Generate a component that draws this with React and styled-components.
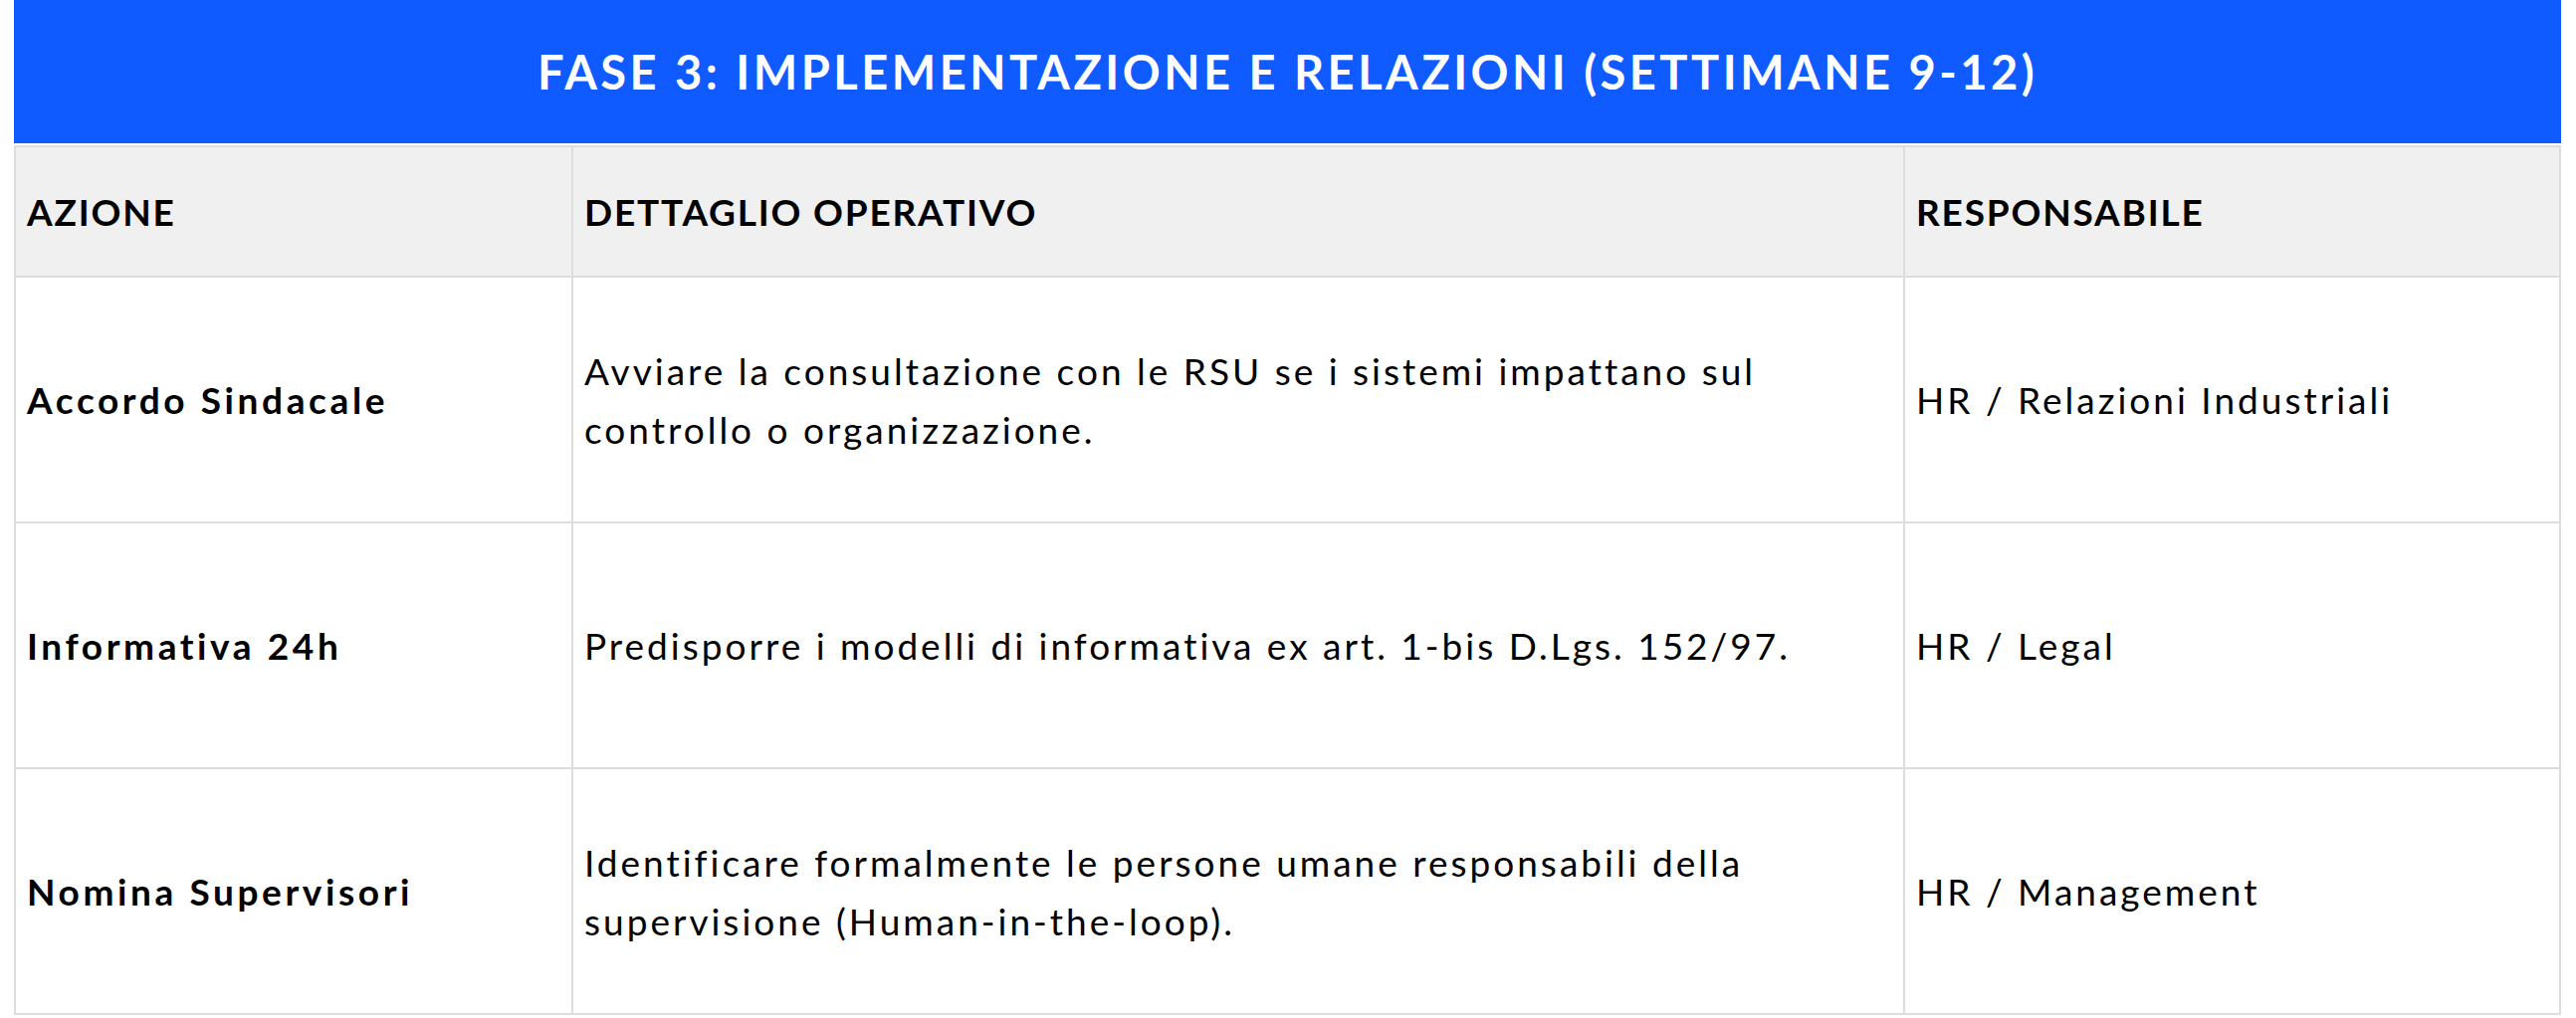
import React from 'react';
import styled, { createGlobalStyle } from 'styled-components';

const GlobalStyle = createGlobalStyle`
  html, body {
    margin: 0;
    padding: 0;
    background: #ffffff;
  }
  body {
    font-family: Lato, "Open Sans", sans-serif;
    color: #000000;
  }
`;

const Page = styled.div`
  padding: 0 15px 0 14px;
`;

const TitleBar = styled.div`
  height: 144px;
  background-color: #0f5bff;
  color: #ffffff;
  display: flex;
  align-items: center;
  justify-content: center;
  font-size: 47px;
  font-weight: 700;
  letter-spacing: 3.5px;
  margin-bottom: 2px;
`;

const Table = styled.div`
  display: grid;
  grid-template-columns: 558px 1336px 1fr;
  grid-template-rows: 129px repeat(3, 245px);
  gap: 2px;
  padding: 2px;
  background-color: #dddddd;
`;

const Cell = styled.div`
  display: flex;
  align-items: center;
  padding: 0 11px;
  background-color: ${(props) => (props.head ? '#f0f0f0' : '#ffffff')};
  font-size: 37px;
  line-height: 59px;
  font-weight: ${(props) => (props.bold ? 700 : 400)};
  letter-spacing: ${(props) => {
    if (props.head) return '1.8px';
    if (props.bold) return '3.6px';
    return '3px';
  }};
`;

const CellText = styled.span`
  max-width: ${(props) => props.wrapAt || 'none'};
`;

const rows = [
  {
    azione: 'Accordo Sindacale',
    dettaglio: 'Avviare la consultazione con le RSU se i sistemi impattano sul controllo o organizzazione.',
    responsabile: 'HR / Relazioni Industriali',
  },
  {
    azione: 'Informativa 24h',
    dettaglio: 'Predisporre i modelli di informativa ex art. 1-bis D.Lgs. 152/97.',
    responsabile: 'HR / Legal',
  },
  {
    azione: 'Nomina Supervisori',
    dettaglio: 'Identificare formalmente le persone umane responsabili della supervisione (Human-in-the-loop).',
    responsabile: 'HR / Management',
  },
];

const App = () => (
  <>
    <GlobalStyle />
    <Page>
      <TitleBar>FASE 3: IMPLEMENTAZIONE E RELAZIONI (SETTIMANE 9-12)</TitleBar>
      <Table>
        <Cell head bold>AZIONE</Cell>
        <Cell head bold>DETTAGLIO OPERATIVO</Cell>
        <Cell head bold>RESPONSABILE</Cell>
        {rows.map((row) => (
          <React.Fragment key={row.azione}>
            <Cell bold>{row.azione}</Cell>
            <Cell>
              <CellText wrapAt="1290px">{row.dettaglio}</CellText>
            </Cell>
            <Cell>{row.responsabile}</Cell>
          </React.Fragment>
        ))}
      </Table>
    </Page>
  </>
);

export default App;
